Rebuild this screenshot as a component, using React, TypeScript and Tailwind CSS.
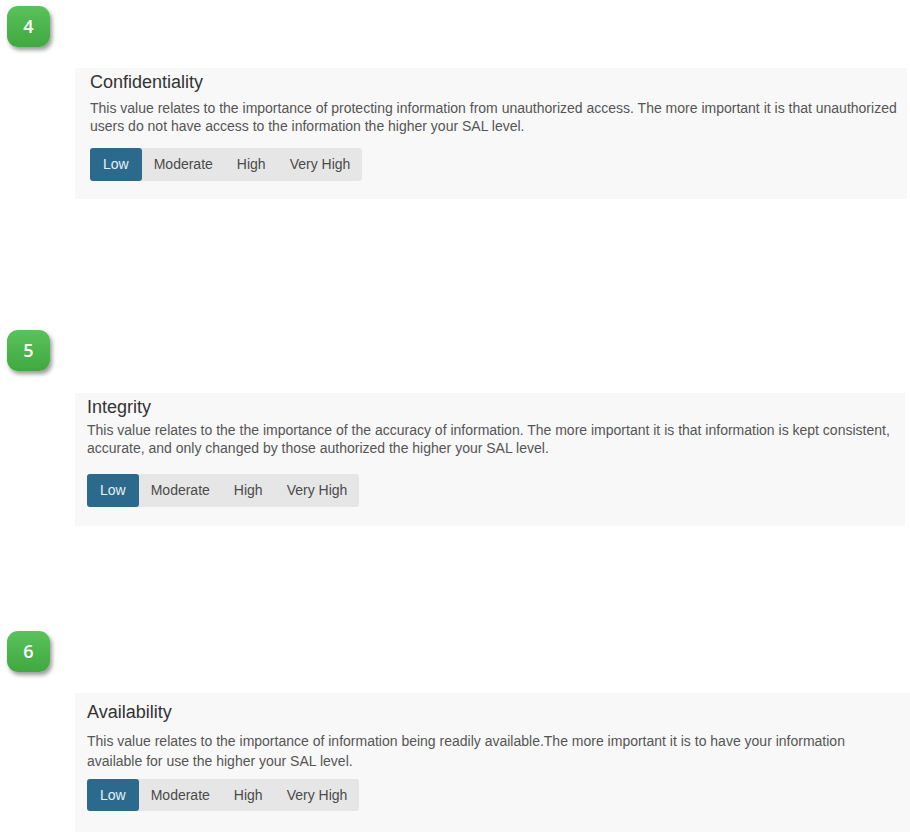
import React from "react";

const font = { fontFamily: '"Liberation Sans", Arial, sans-serif' };

function Badge({ n, className }: { n: number; className: string }) {
  return (
    <div
      className={`ml-[7px] flex h-[41px] w-[43px] items-center justify-center rounded-[11px] bg-gradient-to-b from-[#5bc25b] to-[#3fa83f] shadow-[2px_3px_4px_rgba(0,0,0,0.4)] ${className}`}
    >
      <span className="text-[18px] font-semibold text-white" style={{ fontFamily: '"Open Sans", sans-serif' }}>
        {n}
      </span>
    </div>
  );
}

function Levels({ h }: { h: string }) {
  const items = ["Low", "Moderate", "High", "Very High"];
  return (
    <div className="inline-flex rounded-[3px] bg-[#e6e6e6]">
      {items.map((t, i) => (
        <div
          key={t}
          className={
            i === 0
              ? `flex ${h} items-center rounded-[3px] bg-[#2b6a8c] px-[13px] text-[14px] text-[#e8f1f6]`
              : `flex ${h} items-center px-[12px] text-[14px] text-[#4a4a4a]`
          }
        >
          {t}
        </div>
      ))}
    </div>
  );
}

function Panel({
  title,
  lines,
  className,
  descClass,
  btnClass,
  h,
}: {
  title: string;
  lines: string[];
  className: string;
  descClass: string;
  btnClass: string;
  h: string;
}) {
  return (
    <div className={`ml-[75px] bg-[#f8f8f8] ${className}`}>
      <div className="text-[18px] leading-[22px] text-[#333]">{title}</div>
      <div className={`text-[14px] text-[#555] ${descClass}`}>
        {lines.map((l, i) => (
          <div key={i} className="whitespace-nowrap">
            {l}
          </div>
        ))}
      </div>
      <div className={btnClass}>
        <Levels h={h} />
      </div>
    </div>
  );
}

export default function App() {
  return (
    <div className="min-h-[832px] w-[910px] bg-white pt-[6px]" style={font}>
      <Badge n={4} className="" />
      <Panel
        className="mt-[21px] mr-[3px] h-[131px] pl-[15px] pt-[3px]"
        descClass="mt-[6px] leading-[18px]"
        btnClass="mt-[13px]"
        h="h-[33px]"
        title="Confidentiality"
        lines={[
          "This value relates to the importance of protecting information from unauthorized access. The more important it is that unauthorized",
          "users do not have access to the information the higher your SAL level.",
        ]}
      />
      <Badge n={5} className="mt-[131px]" />
      <Panel
        className="mt-[22px] mr-[5px] h-[133px] pl-[12px] pt-[3px]"
        descClass="mt-[3px] leading-[18px]"
        btnClass="mt-[17px]"
        h="h-[33px]"
        title="Integrity"
        lines={[
          "This value relates to the the importance of the accuracy of information. The more important it is that information is kept consistent,",
          "accurate, and only changed by those authorized the higher your SAL level.",
        ]}
      />
      <Badge n={6} className="mt-[105px]" />
      <Panel
        className="mt-[21px] h-[142px] pl-[12px] pt-[8px]"
        descClass="mt-[8px] leading-[20px]"
        btnClass="mt-[8px]"
        h="h-[32px]"
        title="Availability"
        lines={[
          "This value relates to the importance of information being readily available.The more important it is to have your information",
          "available for use the higher your SAL level.",
        ]}
      />
    </div>
  );
}
